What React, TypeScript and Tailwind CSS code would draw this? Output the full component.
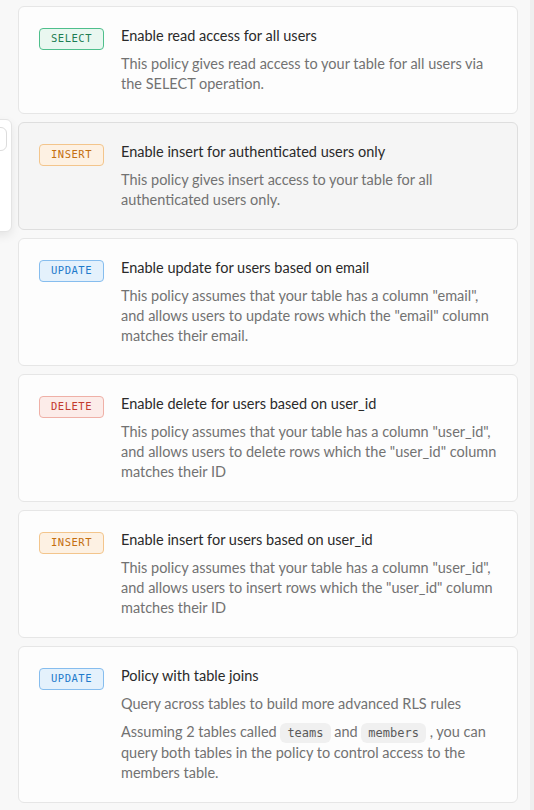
import React from 'react';

type Op = 'SELECT' | 'INSERT' | 'UPDATE' | 'DELETE';

interface Template {
  op: Op;
  title: string;
  body: React.ReactNode[];
  hovered?: boolean;
}

const badgeStyles: Record<Op, string> = {
  SELECT: 'border-[#4fbf8c] bg-[#e9f7f0] text-[#1d7d52]',
  INSERT: 'border-[#f3c58c] bg-[#fdf1e3] text-[#c46f0f]',
  UPDATE: 'border-[#86bdee] bg-[#e4f1fc] text-[#1f7acb]',
  DELETE: 'border-[#efb0a7] bg-[#fcece9] text-[#c23a2d]',
};

const Code = ({ children }: { children: React.ReactNode }) => (
  <code className="rounded-md bg-[#f0f0f0] px-[7px] py-[3px] font-['DejaVu_Sans_Mono',monospace] text-[12px] text-[#5a5a5a]">
    {children}
  </code>
);

const templates: Template[] = [
  {
    op: 'SELECT',
    title: 'Enable read access for all users',
    body: ['This policy gives read access to your table for all users via the SELECT operation.'],
  },
  {
    op: 'INSERT',
    title: 'Enable insert for authenticated users only',
    body: ['This policy gives insert access to your table for all authenticated users only.'],
    hovered: true,
  },
  {
    op: 'UPDATE',
    title: 'Enable update for users based on email',
    body: [
      'This policy assumes that your table has a column "email", and allows users to update rows which the "email" column matches their email.',
    ],
  },
  {
    op: 'DELETE',
    title: 'Enable delete for users based on user_id',
    body: [
      'This policy assumes that your table has a column "user_id", and allows users to delete rows which the "user_id" column matches their ID',
    ],
  },
  {
    op: 'INSERT',
    title: 'Enable insert for users based on user_id',
    body: [
      'This policy assumes that your table has a column "user_id", and allows users to insert rows which the "user_id" column matches their ID',
    ],
  },
  {
    op: 'UPDATE',
    title: 'Policy with table joins',
    body: [
      'Query across tables to build more advanced RLS rules',
      <>
        Assuming 2 tables called <Code>teams</Code> and <Code>members</Code> , you can query both tables in the policy
        to control access to the members table.
      </>,
    ],
  },
];

const TemplateCard = ({ t }: { t: Template }) => (
  <div
    className={`flex gap-[17px] rounded-md border px-5 py-[19px] ${
      t.hovered ? 'border-[#dedede] bg-[#f5f5f5]' : 'border-[#e6e6e6] bg-[#fdfdfd]'
    }`}
  >
    <div className="pt-[2px]">
      <span
        className={`flex h-[22px] w-[65px] items-center justify-center rounded-[4px] border font-['DejaVu_Sans_Mono',monospace] text-[10.5px] tracking-[0.5px] ${badgeStyles[t.op]}`}
      >
        {t.op}
      </span>
    </div>
    <div className="flex min-w-0 flex-1 flex-col gap-2">
      <p className="text-[14.5px] leading-5 text-[#2a2a2a]">{t.title}</p>
      {t.body.map((b, i) => (
        <p key={i} className="text-[14.5px] leading-5 text-[#727272]">
          {b}
        </p>
      ))}
    </div>
  </div>
);

export default function App() {
  return (
    <div className="relative h-[810px] w-[534px] overflow-hidden bg-[#f8f8f8] font-['Lato',sans-serif]">
      <div className="flex h-full">
        <div className="flex flex-1 flex-col gap-2 pb-4 pl-[18px] pr-[12px] pt-[6px]">
          {templates.map((t, i) => (
            <TemplateCard key={i} t={t} />
          ))}
          <div className="h-24 shrink-0 rounded-md border border-[#e6e6e6] bg-[#fdfdfd]" />
        </div>
        <div className="w-[4px] bg-[#efefef]" />
      </div>

      {/* popover edge peeking in from the left */}
      <div className="absolute left-[-200px] top-[119px] h-[113px] w-[212px] rounded-md border border-[#e4e4e4] bg-white shadow-[0_4px_10px_rgba(0,0,0,0.08)]">
        <div className="ml-[150px] mt-[7px] h-[24px] w-[56px] rounded-md border border-[#dcdcdc] bg-white" />
      </div>
    </div>
  );
}
